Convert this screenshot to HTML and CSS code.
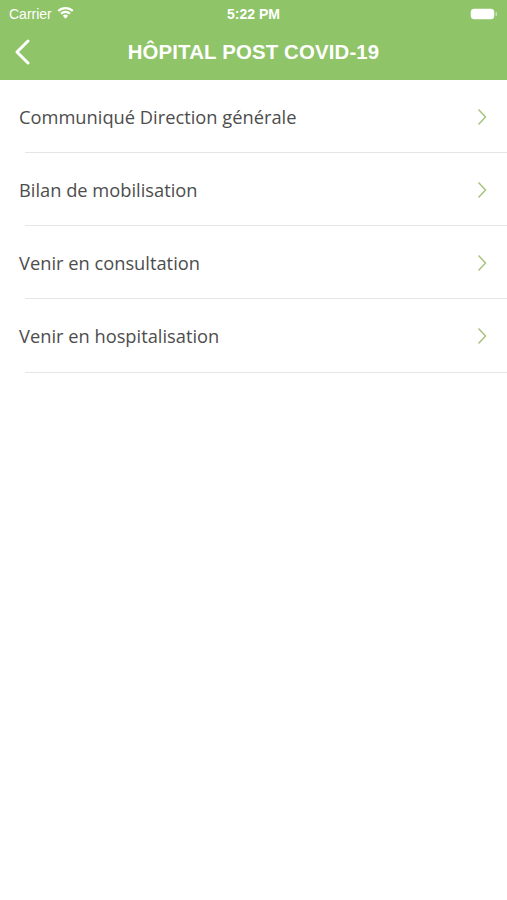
FILE: index.html
```html
<!DOCTYPE html>
<html lang="fr">
<head>
  <meta charset="UTF-8">
  <meta name="viewport" content="width=device-width, initial-scale=1.0">
  <title>Hôpital post COVID-19</title>
  <link rel="stylesheet" href="styles.css">
</head>
<body>
  <!-- Barre d'état + navigation -->
  <header class="top">
    <div class="status-bar">
      <div class="status-left">
        <span>Carrier</span>
        <svg class="wifi" width="17" height="13" viewBox="0 0 16 12">
          <path d="M8 11.8 L5.5 9.1 A3.5 3.5 0 0 1 10.5 9.1 Z" fill="#fff"/>
          <path d="M3.8 7.2 A6 6 0 0 1 12.2 7.2" stroke="#fff" stroke-width="2.1" fill="none"/>
          <path d="M1.2 4.6 A9.6 9.6 0 0 1 14.8 4.6" stroke="#fff" stroke-width="2.1" fill="none"/>
        </svg>
      </div>
      <div class="status-time">5:22 PM</div>
      <div class="status-right">
        <svg width="28" height="12" viewBox="0 0 28 12">
          <rect x="1" y="1" width="23" height="10" rx="3" fill="#fff" stroke="#fff" stroke-opacity="0.5"/>
          <rect x="25.5" y="4" width="1.5" height="4" rx="0.7" fill="#fff" fill-opacity="0.5"/>
        </svg>
      </div>
    </div>
    <nav class="nav-bar">
      <a class="back" href="#">
        <svg width="18" height="26" viewBox="0 0 18 26">
          <path d="M14 2 L3 13 L14 24" stroke="#fff" stroke-width="3" fill="none" stroke-linecap="round" stroke-linejoin="round"/>
        </svg>
      </a>
      <h1>HÔPITAL POST COVID-19</h1>
    </nav>
  </header>

  <ul class="menu">
    <li class="menu-item">
      <span>Communiqué Direction générale</span>
      <svg class="chevron" width="10" height="18" viewBox="0 0 10 18"><path d="M1.5 1.5 L8.5 9 L1.5 16.5" stroke="#a6c47e" stroke-width="1.5" fill="none"/></svg>
    </li>
    <li class="menu-item">
      <span>Bilan de mobilisation</span>
      <svg class="chevron" width="10" height="18" viewBox="0 0 10 18"><path d="M1.5 1.5 L8.5 9 L1.5 16.5" stroke="#a6c47e" stroke-width="1.5" fill="none"/></svg>
    </li>
    <li class="menu-item">
      <span>Venir en consultation</span>
      <svg class="chevron" width="10" height="18" viewBox="0 0 10 18"><path d="M1.5 1.5 L8.5 9 L1.5 16.5" stroke="#a6c47e" stroke-width="1.5" fill="none"/></svg>
    </li>
    <li class="menu-item">
      <span>Venir en hospitalisation</span>
      <svg class="chevron" width="10" height="18" viewBox="0 0 10 18"><path d="M1.5 1.5 L8.5 9 L1.5 16.5" stroke="#a6c47e" stroke-width="1.5" fill="none"/></svg>
    </li>
  </ul>
</body>
</html>
```

FILE: styles.css
```css
body {
  margin: 0;
  background-color: #fff;
  font-family: "Open Sans", sans-serif;
  color: #4d4d4d;
}

.top {
  background-color: #90c468;
  color: #fff;
}

.status-bar {
  height: 28px;
  display: flex;
  align-items: center;
  justify-content: space-between;
  padding: 0 9px;
  font-family: "Liberation Sans", Arial, sans-serif;
  font-size: 14px;
}

.status-left {
  display: flex;
  align-items: center;
  gap: 5px;
  width: 100px;
}

.wifi {
  margin-top: -3px;
}

.status-time {
  font-weight: bold;
  font-size: 14px;
}

.status-right {
  width: 100px;
  display: flex;
  justify-content: flex-end;
}

.nav-bar {
  height: 52px;
  display: flex;
  align-items: center;
  justify-content: center;
}

.back {
  position: absolute;
  left: 14px;
  top: 39px;
  display: block;
}

.nav-bar h1 {
  margin: 0;
  font-family: "Liberation Sans", Arial, sans-serif;
  font-size: 20.4px;
  font-weight: bold;
  letter-spacing: 0.15px;
  margin-top: -4px;
}

.menu {
  list-style: none;
  margin: 0;
  padding: 0;
}

.menu-item {
  height: 72px;
  display: flex;
  align-items: center;
  justify-content: space-between;
  padding: 0 20px 0 19px;
  font-size: 18.3px;
  position: relative;
  border-bottom: 1px solid transparent;
}

.menu-item:last-child {
  height: 73px;
}

.menu-item::after {
  content: "";
  position: absolute;
  left: 25px;
  right: 0;
  bottom: -1px;
  height: 1px;
  background-color: #e6e6e6;
}

.chevron {
  margin-top: 1px;
}
```
